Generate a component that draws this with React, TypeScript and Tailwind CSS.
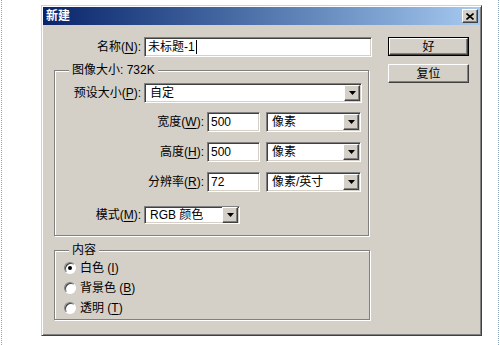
import type { ReactNode } from 'react';

const sunken =
    'border border-t-[#808080] border-l-[#808080] border-b-white border-r-white shadow-[inset_1px_1px_0_#404040,inset_-1px_-1px_0_#d4d0c8]';
const raised =
    'border border-t-white border-l-white border-r-[#404040] border-b-[#404040] shadow-[inset_-1px_-1px_0_#808080,inset_1px_1px_0_#d4d0c8]';
const etched = 'border border-[#808080] shadow-[inset_1px_1px_0_#ffffff,1px_1px_0_#ffffff]';

function U({ children }: { children: ReactNode }) {
    return <span className="underline underline-offset-[2px]">{children}</span>;
}

function DropButton() {
    return (
        <div className={`flex h-[16px] w-[16px] shrink-0 items-center justify-center bg-[#d4d0c8] ${raised}`}>
            <svg width="7" height="4" viewBox="0 0 7 4">
                <path d="M0 0h7L3.5 4z" fill="#000" />
            </svg>
        </div>
    );
}

function Input({ value, w, cursor }: { value: string; w: string; cursor?: boolean }) {
    return (
        <div className={`flex h-[20px] items-center bg-white pl-[3px] ${w} ${sunken}`}>
            <span className="leading-none">{value}</span>
            {cursor && <span className="ml-[1px] h-[14px] w-[1px] bg-black" />}
        </div>
    );
}

function Select({ value, w, h = 'h-[20px]' }: { value: string; w: string; h?: string }) {
    return (
        <div className={`flex items-center bg-white p-[1px] ${h} ${w} ${sunken}`}>
            <span className="flex-1 pl-[4px] leading-none">{value}</span>
            <DropButton />
        </div>
    );
}

function Radio({ checked, children }: { checked?: boolean; children: ReactNode }) {
    return (
        <div className="flex h-[20px] items-center gap-[4px]">
            <div className="flex h-[12px] w-[12px] items-center justify-center rounded-full border border-t-[#808080] border-l-[#808080] border-b-white border-r-white bg-white shadow-[inset_1px_1px_0_#404040]">
                {checked && <div className="h-[4px] w-[4px] rounded-full bg-black" />}
            </div>
            <span>{children}</span>
        </div>
    );
}

export default function App() {
    return (
        <div className="h-[345px] w-[500px] overflow-hidden bg-white font-['Liberation_Sans','Noto_Sans_CJK_SC',sans-serif] text-[12px] text-black">
            <div className="mx-[1px] h-full border-x border-dotted border-[#93a3bb] pt-[5px] pl-[39px]">
                <div className="flex h-[331px] w-[441px] flex-col border border-t-[#d4d0c8] border-l-[#d4d0c8] border-r-[#404040] border-b-[#404040] bg-[#d4d0c8] p-[1px] shadow-[inset_1px_1px_0_#ffffff,inset_-1px_-1px_0_#808080]">
                    <div className="flex h-[18px] items-center justify-between bg-gradient-to-r from-[#0a246a] to-[#a6caf0] pl-[3px] pr-[2px]">
                        <span className="font-bold text-white">新建</span>
                        <div className={`flex h-[14px] w-[16px] items-center justify-center bg-[#d4d0c8] ${raised}`}>
                            <svg width="8" height="7" viewBox="0 0 8 7">
                                <path d="M0.5 0.5l7 6M7.5 0.5l-7 6" stroke="#000" strokeWidth="1.6" />
                            </svg>
                        </div>
                    </div>

                    <div className="flex flex-1">
                        <div className="flex-1 pt-[12px]">
                            <div className="flex items-center">
                                <span className="w-[98px] text-right">
                                    名称(<U>N</U>):
                                </span>
                                <div className="ml-[3px]">
                                    <Input value="未标题-1" w="w-[228px]" cursor />
                                </div>
                            </div>

                            <fieldset className={`ml-[11px] mt-[6px] w-[315px] pb-[11px] ${etched}`}>
                                <legend className="ml-[14px] bg-[#d4d0c8] px-[3px] leading-[14px]">图像大小: 732K</legend>
                                <div className="flex flex-col pt-[6px]">
                                    <div className="flex items-center">
                                        <span className="w-[86px] text-right">
                                            预设大小(<U>P</U>):
                                        </span>
                                        <div className="ml-[3px]">
                                            <Select value="自定" w="w-[218px]" />
                                        </div>
                                    </div>
                                    {[
                                        ['宽度', 'W', '500', '像素', 'mt-[9px]'],
                                        ['高度', 'H', '500', '像素', 'mt-[10px]'],
                                        ['分辨率', 'R', '72', '像素/英寸', 'mt-[10px]'],
                                    ].map(([label, key, value, unit, mt]) => (
                                        <div key={key} className={`flex items-center ${mt}`}>
                                            <span className="w-[149px] text-right">
                                                {label}(<U>{key}</U>):
                                            </span>
                                            <div className="ml-[3px]">
                                                <Input value={value} w="w-[53px]" />
                                            </div>
                                            <div className="ml-[6px]">
                                                <Select value={unit} w="w-[95px]" />
                                            </div>
                                        </div>
                                    ))}
                                    <div className="mt-[14px] flex items-center">
                                        <span className="w-[86px] text-right">
                                            模式(<U>M</U>):
                                        </span>
                                        <div className="ml-[3px]">
                                            <Select value="RGB 颜色" w="w-[96px]" h="h-[18px]" />
                                        </div>
                                    </div>
                                </div>
                            </fieldset>

                            <fieldset className={`ml-[11px] mt-[7px] w-[316px] pb-[1px] pl-[9px] ${etched}`}>
                                <legend className="ml-[5px] bg-[#d4d0c8] px-[3px] leading-[14px]">内容</legend>
                                <div className="pt-[1px]">
                                    <Radio checked>
                                        白色 (<U>I</U>)
                                    </Radio>
                                    <Radio>
                                        背景色 (<U>B</U>)
                                    </Radio>
                                    <Radio>
                                        透明 (<U>T</U>)
                                    </Radio>
                                </div>
                            </fieldset>
                        </div>

                        <div className="mr-[11px] flex w-[81px] flex-col pt-[12px]">
                            <div className="h-[19px] border border-black">
                                <div className={`flex h-full items-center justify-center bg-[#d4d0c8] ${raised}`}>好</div>
                            </div>
                            <div className={`mt-[8px] flex h-[19px] items-center justify-center bg-[#d4d0c8] ${raised}`}>
                                复位
                            </div>
                        </div>
                    </div>
                </div>
            </div>
        </div>
    );
}
